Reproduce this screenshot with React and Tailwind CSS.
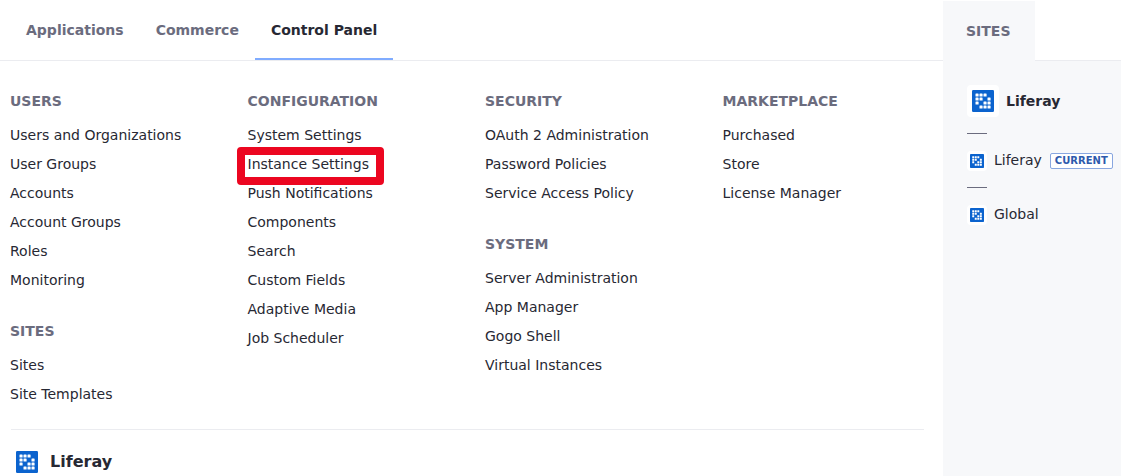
const tabs = ['Applications', 'Commerce', 'Control Panel'];

const columns = [
  [
    { title: 'USERS', items: ['Users and Organizations', 'User Groups', 'Accounts', 'Account Groups', 'Roles', 'Monitoring'] },
    { title: 'SITES', items: ['Sites', 'Site Templates'] },
  ],
  [
    {
      title: 'CONFIGURATION',
      items: ['System Settings', 'Instance Settings', 'Push Notifications', 'Components', 'Search', 'Custom Fields', 'Adaptive Media', 'Job Scheduler'],
    },
  ],
  [
    { title: 'SECURITY', items: ['OAuth 2 Administration', 'Password Policies', 'Service Access Policy'] },
    { title: 'SYSTEM', items: ['Server Administration', 'App Manager', 'Gogo Shell', 'Virtual Instances'] },
  ],
  [{ title: 'MARKETPLACE', items: ['Purchased', 'Store', 'License Manager'] }],
];

const dots = [
  [0, 0], [1, 0], [2, 0],
  [0, 1], [1, 1], [3, 1],
  [0, 2], [2, 2], [3, 2],
  [1, 3], [2, 3], [3, 3],
];

function Logo({ className }) {
  return (
    <svg viewBox="0 0 22 22" className={className} aria-hidden="true">
      <rect width="22" height="22" rx="1.2" fill="#0b63ce" />
      {dots.map(([x, y]) => (
        <rect key={`${x}-${y}`} x={3.5 + x * 4} y={3.5 + y * 4} width="3.1" height="3.1" rx="0.4" fill="#fff" />
      ))}
    </svg>
  );
}

function Section({ title, items }) {
  return (
    <section>
      <h2 className="mb-[9px] text-sm leading-[21px] font-bold text-[#6b6c7e]">{title}</h2>
      <ul>
        {items.map((item) => (
          <li key={item} className="flex py-1 leading-[21px]">
            <a href="#" className="relative whitespace-nowrap">
              {item}
              {item === 'Instance Settings' && (
                <span className="pointer-events-none absolute -top-[7px] -right-[15px] -bottom-2.5 -left-[11px] rounded border-8 border-[#ec0620]" />
              )}
            </a>
          </li>
        ))}
      </ul>
    </section>
  );
}

function SmallSite({ name, current }) {
  return (
    <a href="#" className="flex items-center gap-[7px] leading-[21px]">
      <span className="flex size-5 shrink-0 items-center justify-center rounded bg-white">
        <Logo className="size-3.5" />
      </span>
      {name}
      {current && (
        <span className="ml-px rounded-xs border border-[#89a7e0] bg-white px-1 text-[10px] leading-[14px] font-bold text-[#2e5aac]">CURRENT</span>
      )}
    </a>
  );
}

export default function App() {
  return (
    <div className="flex min-h-screen overflow-hidden bg-white font-['DejaVu_Sans',sans-serif] text-sm text-[#272833]">
      <main className="min-w-0 flex-1">
        <nav className="flex h-[61px] border-b border-[#ebecf0] pl-2.5">
          {tabs.map((tab) => (
            <a
              key={tab}
              href="#"
              className={`flex items-center border-b-2 px-4 pt-0.5 font-bold whitespace-nowrap ${
                tab === 'Control Panel' ? 'border-[#80acff]' : 'border-transparent text-[#6b6c7e]'
              }`}
            >
              {tab}
            </a>
          ))}
        </nav>
        <div className="pt-[30px] pr-[19px] pl-2.5">
          <div className="grid grid-cols-4 gap-x-9">
            {columns.map((sections) => (
              <div key={sections[0].title} className="flex min-w-0 flex-col gap-[26px]">
                {sections.map((section) => (
                  <Section key={section.title} {...section} />
                ))}
              </div>
            ))}
          </div>
          <hr className="mt-5 ml-px border-[#ebecf0]" />
          <a href="#" className="mt-5 flex items-center gap-3 pl-1.5 text-base leading-6 font-bold">
            <Logo className="size-[22px]" />
            Liferay
          </a>
        </div>
      </main>
      <aside className="flex w-[178px] shrink-0 flex-col">
        <div className="flex h-[61px] border-b border-[#ebecf0] pt-px">
          <h2 className="-mb-px flex items-center bg-[#f7f8fa] pr-6 pl-[23px] font-bold text-[#6b6c7e]">SITES</h2>
        </div>
        <div className="flex flex-1 flex-col bg-[#f7f8fa] pt-6 pl-6">
          <a href="#" className="flex items-center gap-[7px] font-bold">
            <span className="flex size-8 items-center justify-center rounded bg-white">
              <Logo className="size-[22px]" />
            </span>
            Liferay
          </a>
          <hr className="my-4 w-5 border-[#6b6c7e]" />
          <SmallSite name="Liferay" current />
          <hr className="my-4 w-5 border-[#6b6c7e]" />
          <SmallSite name="Global" />
        </div>
      </aside>
    </div>
  );
}
